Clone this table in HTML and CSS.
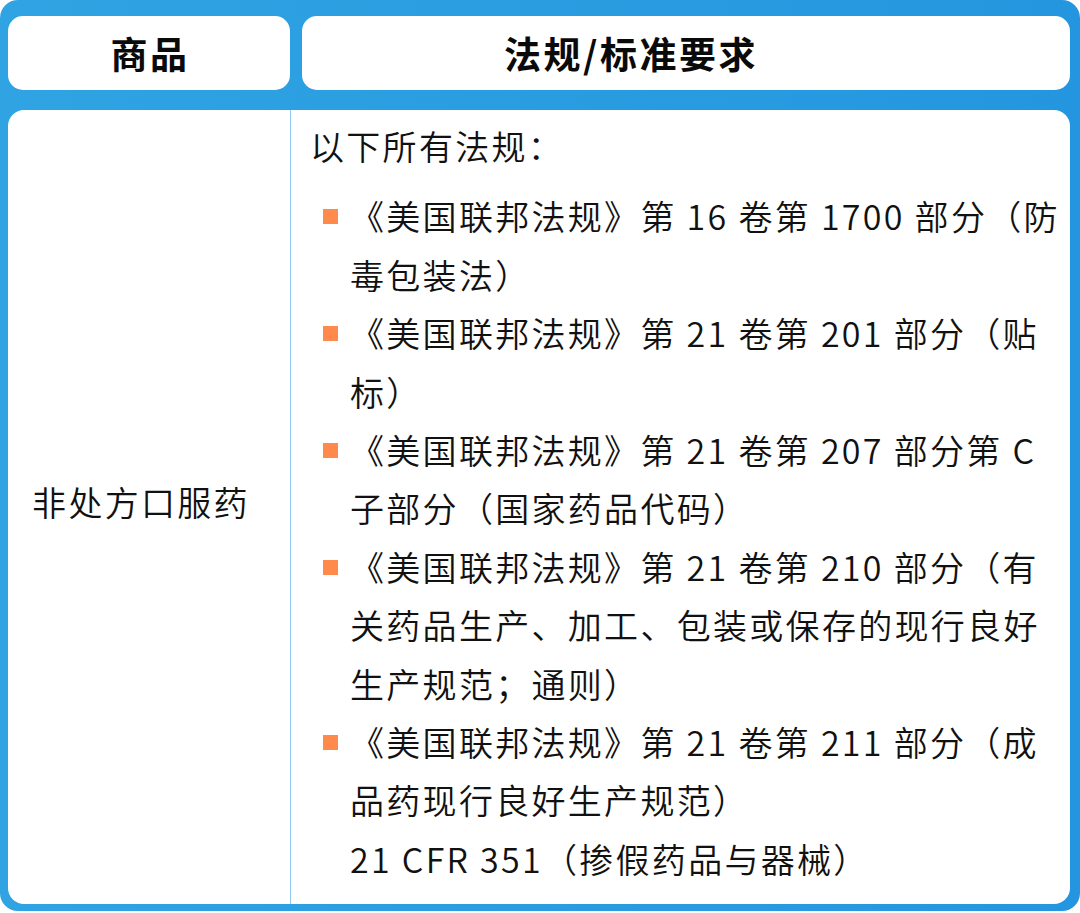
FILE: index.html
```html
<!DOCTYPE html>
<html lang="zh-CN">
<head>
<meta charset="utf-8">
<title>商品法规</title>
<link rel="stylesheet" href="styles.css">
</head>
<body>
<div class="table">
  <div class="head">
    <div class="th th-goods">商品</div>
    <div class="th th-rules">法规/标准要求</div>
  </div>
  <div class="tbody">
    <div class="cell-goods">非处方口服药</div>
    <div class="cell-rules">
      <p class="intro">以下所有法规：</p>
      <ul class="rules">
        <li><span class="mark"></span><span class="txt">《美国联邦法规》第 16 卷第 1700 部分（防毒包装法）</span></li>
        <li><span class="mark"></span><span class="txt">《美国联邦法规》第 21 卷第 201 部分（贴标）</span></li>
        <li><span class="mark"></span><span class="txt">《美国联邦法规》第 21 卷第 207 部分第 C 子部分（国家药品代码）</span></li>
        <li><span class="mark"></span><span class="txt">《美国联邦法规》第 21 卷第 210 部分（有关药品生产、加工、包装或保存的现行良好生产规范；通则）</span></li>
        <li><span class="mark"></span><span class="txt">《美国联邦法规》第 21 卷第 211 部分（成品药现行良好生产规范）<br>21 CFR 351（掺假药品与器械）</span></li>
      </ul>
    </div>
  </div>
</div>
</body>
</html>
```

FILE: styles.css
```css
html, body {
  margin: 0;
  padding: 0;
  background: #ffffff;
}

body {
  font-family: "Noto Sans CJK SC", "Noto Sans", sans-serif;
  color: #111111;
}

.table {
  width: 1080px;
  height: 911px;
  box-sizing: border-box;
  padding: 16px 10px 7px 8px;
  background: linear-gradient(90deg, #30a3e3 0%, #2a9de1 50%, #2396df 100%);
  border-radius: 18px;
  display: flex;
  flex-direction: column;
  gap: 20px;
}

.head {
  display: flex;
  gap: 12px;
  height: 74px;
  flex: none;
}

.th {
  background: #ffffff;
  border-radius: 15px;
  display: flex;
  align-items: center;
  justify-content: center;
  font-weight: 700;
  font-size: 37px;
  letter-spacing: 2.5px;
  color: #0a0a0a;
  box-sizing: border-box;
}

.th-goods {
  width: 282px;
  padding-left: 2px;
}

.th-rules {
  flex: 1;
  padding-right: 110px;
}

.tbody {
  flex: 1;
  background: #ffffff;
  border-radius: 16px;
  display: flex;
  min-height: 0;
}

.cell-goods {
  width: 283px;
  box-sizing: border-box;
  border-right: 1px solid #93c9ef;
  display: flex;
  align-items: center;
  justify-content: center;
  padding-right: 16px;
  padding-bottom: 12px;
  font-size: 34px;
  font-weight: 350;
  letter-spacing: 2.3px;
}

.cell-rules {
  flex: 1;
  padding: 7px 4px 0 19px;
  font-size: 34px;
  font-weight: 350;
  letter-spacing: 2.3px;
  line-height: 58.4px;
}

.intro {
  margin: 0 0 12px 0;
}

.rules {
  list-style: none;
  margin: 0;
  padding: 0;
}

.rules li {
  display: flex;
  align-items: flex-start;
}

.mark {
  flex: none;
  width: 40px;
  height: 58.4px;
  display: flex;
  align-items: center;
}

.mark::before {
  content: "";
  display: block;
  width: 15px;
  height: 15px;
  margin-left: 13px;
  background: #ff8a4c;
}

.txt {
  flex: 1;
  min-width: 0;
}
```
